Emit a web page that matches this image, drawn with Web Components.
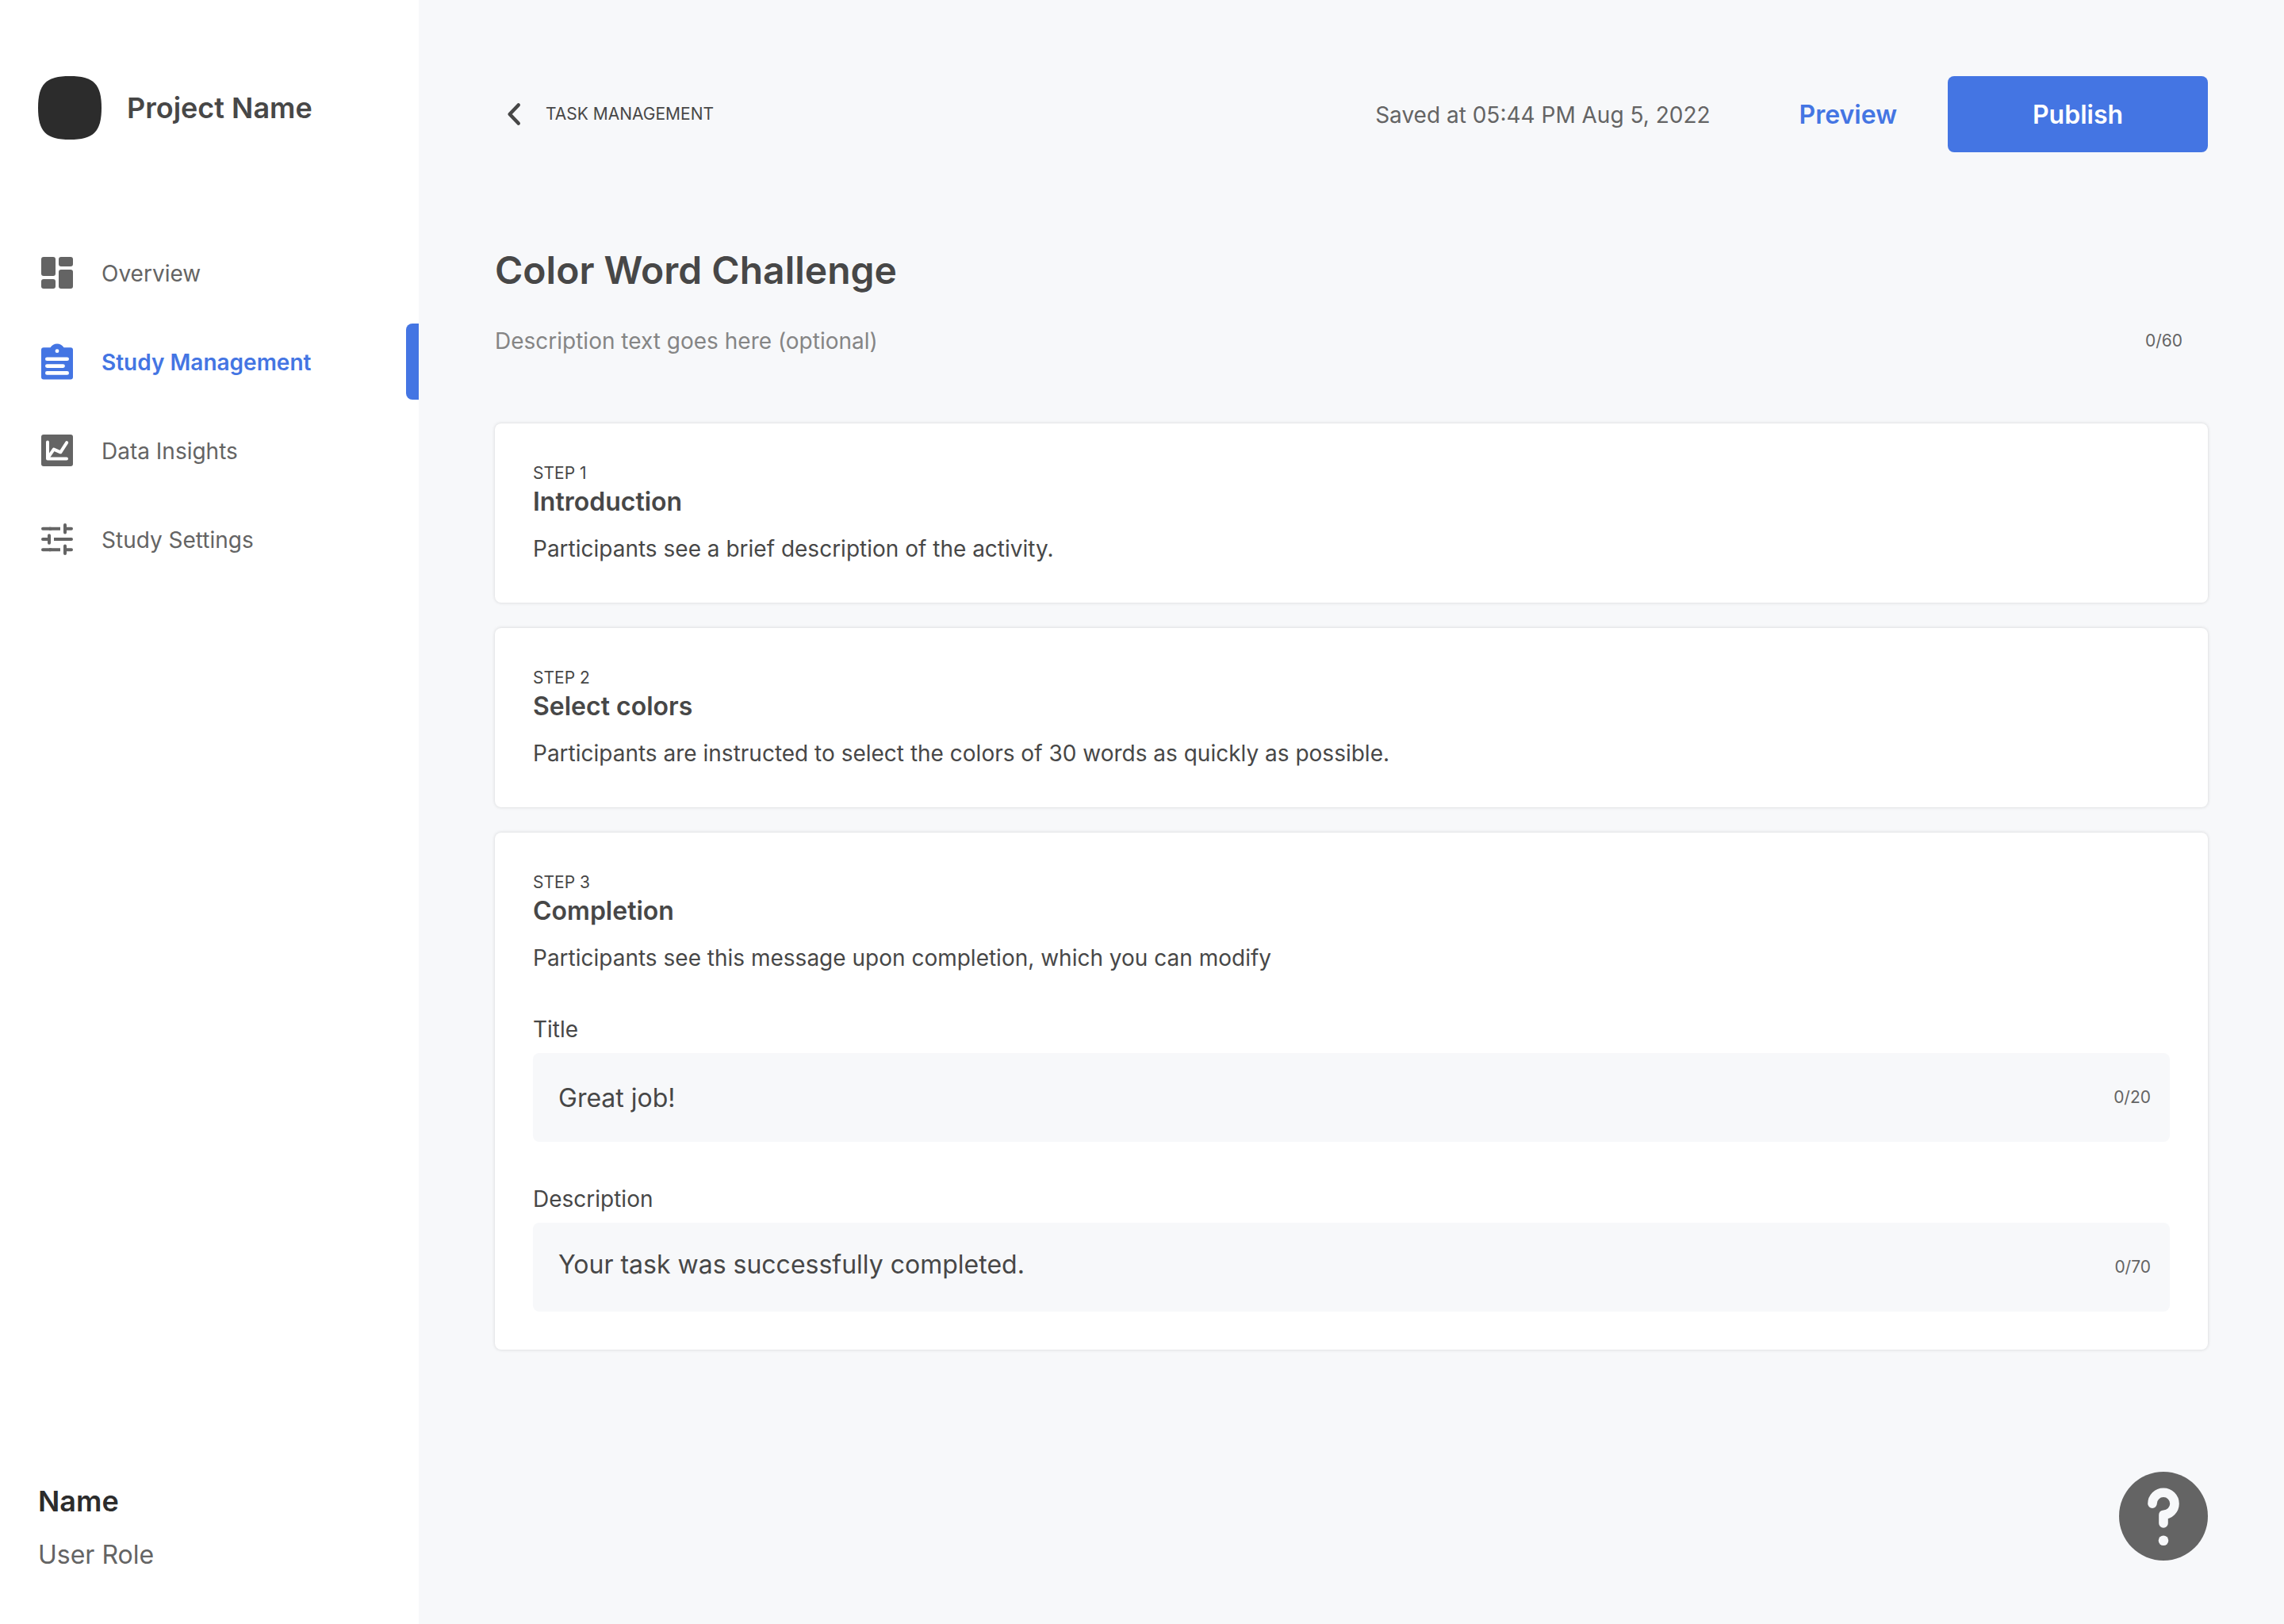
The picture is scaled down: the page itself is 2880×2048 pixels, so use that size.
<!DOCTYPE html>
<html lang="en">
<head>
<meta charset="utf-8">
<meta name="viewport" content="width=device-width, initial-scale=1">
<title>Study Management</title>
<style>
  html, body { margin: 0; height: 100%; }
  body {
    --blue: #4475e3;
    --canvas: #f7f8fa;
    --ink: #2c2c2c;
    --text: #474747;
    --muted: #646464;
    --placeholder: #858585;
    font-family: Inter, "Liberation Sans", sans-serif;
    font-size: 28px;
    line-height: 40px;
    color: var(--text);
    background: var(--canvas);
  }
</style>
</head>
<body>
<app-shell>
  <side-bar slot="sidebar" project="Project Name" user="Name" role-name="User Role">
    <nav-item icon="dashboard">Overview</nav-item>
    <nav-item icon="clipboard" active>Study Management</nav-item>
    <nav-item icon="insights">Data Insights</nav-item>
    <nav-item icon="sliders">Study Settings</nav-item>
  </side-bar>
  <task-header back="TASK MANAGEMENT">Saved at 05:44 PM Aug 5, 2022</task-header>
  <task-intro placeholder="Description text goes here (optional)" count="0/60">Color Word Challenge</task-intro>
  <step-list>
    <step-card step="STEP 1" heading="Introduction" text="Participants see a brief description of the activity."></step-card>
    <step-card step="STEP 2" heading="Select colors" text="Participants are instructed to select the colors of 30 words as quickly as possible."></step-card>
    <step-card step="STEP 3" heading="Completion" text="Participants see this message upon completion, which you can modify">
      <field-group>
        <text-field label="Title" value="Great job!" count="0/20"></text-field>
        <text-field label="Description" value="Your task was successfully completed." count="0/70" multiline></text-field>
      </field-group>
    </step-card>
  </step-list>
  <help-button slot="help"></help-button>
</app-shell>

<script>
const ICONS = {
  dashboard: `<g fill="currentColor"><rect x="4" y="4" width="18" height="24" rx="3"/><rect x="4" y="32" width="18" height="12" rx="3"/><rect x="26" y="4" width="18" height="12" rx="3"/><rect x="26" y="20" width="18" height="24" rx="3"/></g>`,
  clipboard: `<path fill="currentColor" d="M7 6.200H15.500C17.500 3.300 20.500 1.600 24 1.600S30.500 3.300 32.500 6.200H41A3 3 0 0 1 44 9.200V43.400A3 3 0 0 1 41 46.400H7A3 3 0 0 1 4 43.400V9.200A3 3 0 0 1 7 6.200Z"/><circle cx="24" cy="10.700" r="2.400" fill="#fff"/><path d="M11.300 20.700H36.700M11.300 29.600H31.600M11.300 38.400H36.700" stroke="#fff" stroke-width="4.600" stroke-linecap="round"/>`,
  insights: `<rect x="4" y="4" width="40" height="40" rx="3" fill="currentColor"/><path d="M12 13.600V34.400H36M12.400 33.400L19.800 22.600L28.300 26.300L36.200 14.200" fill="none" stroke="#fff" stroke-width="4" stroke-linecap="round" stroke-linejoin="round"/>`,
  sliders: `<g fill="none" stroke="currentColor" stroke-width="4"><path stroke-linecap="round" d="M6 10.700H16M34 6V15.400M34 10.700H42M6 24H14M14 19.300V28.700M36 24H42M6 37.300H16M34 32.600V42M34 37.300H42"/><path d="M14 10.700H28M20 24H38M14 37.300H28"/></g>`
};

/* Base class: renders a subclass's template into an open shadow root. */
class ShadowElement extends HTMLElement {
  connectedCallback() {
    if (this.shadowRoot) return;
    const root = this.attachShadow({ mode: "open" });
    root.innerHTML = `<style>*{box-sizing:border-box}${this.css()}</style>${this.html()}`;
  }
  attr(name) { return this.getAttribute(name) || ""; }
}

customElements.define("app-shell", class extends ShadowElement {
  css() { return `
    :host { display: grid; grid-template-columns: 528px minmax(0, 1fr); min-height: 100vh; }
    main { display: flex; flex-direction: column; padding: 96px; }
  `; }
  html() { return `<slot name="sidebar"></slot><main><slot></slot></main><slot name="help"></slot>`; }
});

customElements.define("side-bar", class extends ShadowElement {
  css() { return `
    :host { display: flex; flex-direction: column; background: #fff; padding: 96px 0 66px; }
    header { display: flex; align-items: center; gap: 32px; padding: 0 48px; font-size: 36px; font-weight: 600; line-height: 46px; }
    nav { display: flex; flex-direction: column; gap: 16px; margin-top: 120px; }
    footer { margin-top: auto; padding: 0 48px; display: flex; flex-direction: column; gap: 24px; }
    .user { font-size: 36px; line-height: 46px; font-weight: 600; color: var(--ink); }
    .role { font-size: 32px; line-height: 42px; color: var(--muted); }
    svg { display: block; fill: var(--ink); }
  `; }
  html() { return `
    <header>
      <svg width="80" height="80" viewBox="0 0 80 80" aria-hidden="true"><path d="M40 0C70 0 80 10 80 40S70 80 40 80 0 70 0 40 10 0 40 0Z"/></svg>
      <span>${this.attr("project")}</span>
    </header>
    <nav><slot></slot></nav>
    <footer><span class="user">${this.attr("user")}</span><span class="role">${this.attr("role-name")}</span></footer>
  `; }
});

customElements.define("nav-item", class extends ShadowElement {
  css() { return `
    :host { display: block; color: var(--muted); }
    a { display: flex; align-items: center; gap: 32px; height: 96px; padding-left: 48px; color: inherit; text-decoration: none; }
    span { padding-top: 2px; }
    svg { display: block; flex: none; }
    :host([active]) { color: var(--blue); font-weight: 600; }
    :host([active]) a::after { content: ""; align-self: stretch; width: 16px; margin-left: auto; background: var(--blue); border-radius: 8px 0 0 8px; }
  `; }
  html() { return `
    <a href="#"${this.hasAttribute("active") ? ' aria-current="page"' : ""}>
      <svg width="48" height="48" viewBox="0 0 48 48" aria-hidden="true">${ICONS[this.attr("icon")]}</svg>
      <span><slot></slot></span>
    </a>`; }
});

customElements.define("task-header", class extends ShadowElement {
  css() { return `
    :host { display: flex; align-items: center; justify-content: space-between; height: 96px; }
    .back { display: flex; align-items: center; gap: 16px; color: var(--text); text-decoration: none; font-size: 21px; line-height: 30px; }
    .actions { display: flex; align-items: center; }
    .saved { color: var(--muted); margin-right: 80px; padding-top: 2px; }
    button { font: inherit; font-size: 32px; font-weight: 600; border: 0; margin: 0; height: 96px; padding: 2px 32px 0; cursor: pointer; }
    .preview { color: var(--blue); background: none; margin-right: 32px; }
    .publish { width: 328px; color: #fff; background: var(--blue); border-radius: 8px; }
    svg { display: block; }
  `; }
  html() { return `
    <a class="back" href="#">
      <svg width="48" height="48" viewBox="0 0 48 48" aria-hidden="true"><path d="M29.700 12.500L18.700 24L29.700 35.500" fill="none" stroke="currentColor" stroke-width="4.600" stroke-linecap="round" stroke-linejoin="round"/></svg>
      <span>${this.attr("back")}</span>
    </a>
    <div class="actions">
      <span class="saved"><slot></slot></span>
      <button class="preview" type="button">Preview</button>
      <button class="publish" type="button">Publish</button>
    </div>`; }
});

customElements.define("task-intro", class extends ShadowElement {
  css() { return `
    :host { display: block; margin-top: 120px; }
    h1 { margin: 0 0 40px; font-size: 48px; line-height: 58px; font-weight: 600; }
    label { display: flex; align-items: center; padding-right: 32px; }
    input { flex: 1; min-width: 0; height: 40px; padding: 0; border: 0; outline: 0; background: none; font: inherit; color: inherit; }
    input::placeholder { color: var(--placeholder); opacity: 1; }
    .count { font-size: 21px; line-height: 30px; color: var(--muted); }
  `; }
  html() { return `
    <h1><slot></slot></h1>
    <label><input type="text" aria-label="Description" placeholder="${this.attr("placeholder")}"><span class="count">${this.attr("count")}</span></label>`; }
});

customElements.define("step-list", class extends ShadowElement {
  css() { return `:host { display: flex; flex-direction: column; gap: 32px; margin-top: 84px; }`; }
  html() { return `<slot></slot>`; }
});

customElements.define("step-card", class extends ShadowElement {
  css() { return `
    :host { display: block; padding: 48px; background: #fff; border-radius: 8px; box-shadow: 0 0 4px rgba(0, 0, 0, .15); }
    .step { font-size: 21px; line-height: 30px; }
    h2 { margin: 0 0 18px; font-size: 32px; line-height: 42px; font-weight: 600; }
    p { margin: 0; }
  `; }
  html() { return `<div class="step">${this.attr("step")}</div><h2>${this.attr("heading")}</h2><p>${this.attr("text")}</p><slot></slot>`; }
});

customElements.define("field-group", class extends ShadowElement {
  css() { return `:host { display: flex; flex-direction: column; gap: 52px; margin-top: 50px; }`; }
  html() { return `<slot></slot>`; }
});

customElements.define("text-field", class extends ShadowElement {
  css() { return `
    :host { display: flex; flex-direction: column; gap: 10px; }
    .box { display: flex; align-items: center; height: 112px; padding-right: 24px; background: var(--canvas); border-radius: 8px; }
    input, textarea { flex: 1; min-width: 0; height: 112px; margin: 0; padding: 0 32px; border: 0; outline: 0; background: none; font: inherit; font-size: 32px; line-height: 42px; color: inherit; }
    textarea { display: block; padding: 32px; resize: none; overflow: hidden; }
    .count { font-size: 21px; line-height: 30px; color: var(--muted); }
  `; }
  html() {
    const v = this.attr("value");
    return `<label for="field">${this.attr("label")}</label>
    <div class="box">${this.hasAttribute("multiline") ? `<textarea id="field" rows="1">${v}</textarea>` : `<input id="field" type="text" value="${v}">`}<span class="count">${this.attr("count")}</span></div>`;
  }
});

customElements.define("help-button", class extends ShadowElement {
  css() { return `
    :host { position: fixed; right: 96px; bottom: 80px; display: block; }
    button { display: block; padding: 0; border: 0; background: none; cursor: pointer; border-radius: 50%; }
    svg { display: block; }
  `; }
  html() { return `
    <button type="button" aria-label="Help">
      <svg width="112" height="112" viewBox="0 0 112 112" aria-hidden="true">
        <circle cx="56" cy="56" r="56" fill="#646464"/>
        <path d="M42 40.200A14 14 0 1 1 56 54.200V65" fill="none" stroke="#f7f8fa" stroke-width="11.600" stroke-linecap="round" stroke-linejoin="round"/>
        <circle cx="56" cy="86.700" r="6.300" fill="#f7f8fa"/>
      </svg>
    </button>`; }
});
</script>
</body>
</html>
